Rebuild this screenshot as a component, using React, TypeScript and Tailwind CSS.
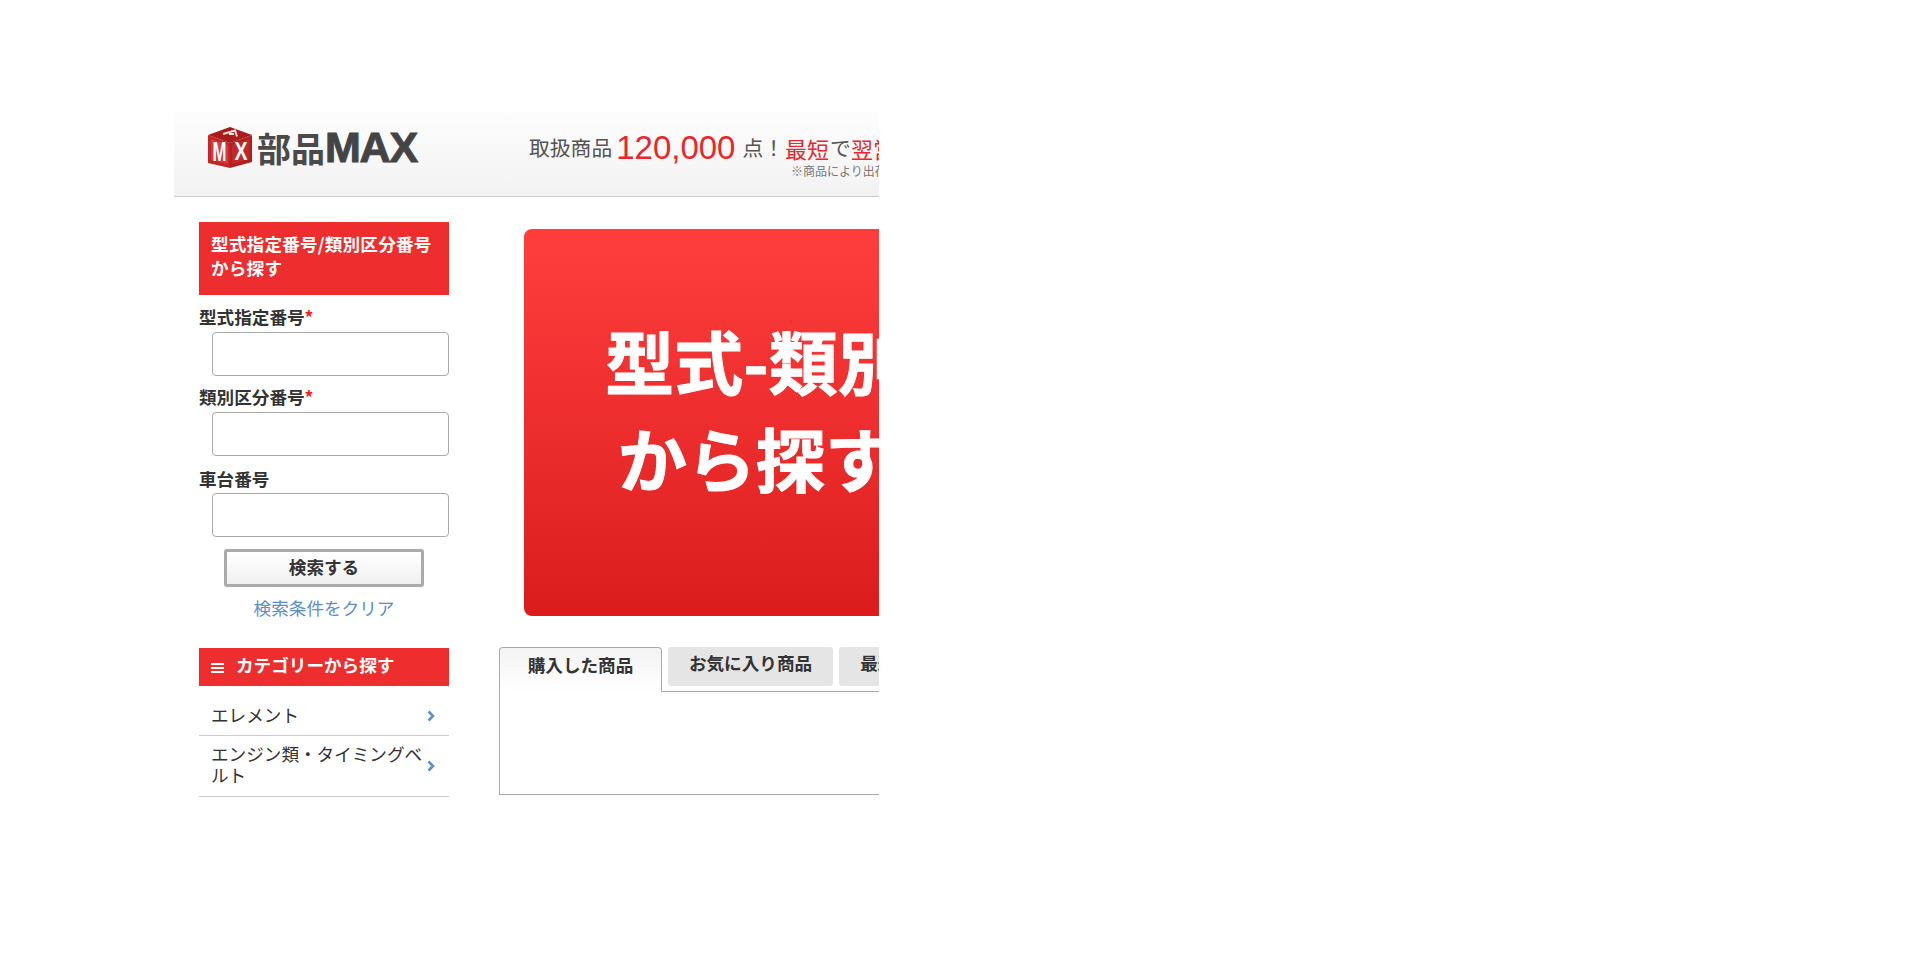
import React from "react";

const jp = "[font-family:'Noto_Sans_CJK_JP','Liberation_Sans',sans-serif]";

function CubeLogo() {
  return (
    <svg width="44" height="41" viewBox="0 0 44 41" className="shrink-0">
      <polygon points="22,0 44,8 22,16 0,8" fill="#a81c1c" />
      <polygon points="0,8 22,16 22,41 0,36" fill="#c42626" />
      <polygon points="44,8 22,16 22,41 44,35" fill="#b02020" />
      <polygon points="3,12 20,18 20,37 3,33" fill="#d63a3a" />
      <polygon points="41,12 24,18 24,37 41,32" fill="#c22a2a" />
      <path d="M15 7 L27 3.5 L29 9.5 M21 7 L26 7" fill="none" stroke="#f3dcdc" strokeWidth="2" />
      <text x="4.5" y="34" fontSize="27" fontWeight="700" fill="#fff" fontFamily="Liberation Sans" textLength="14" lengthAdjust="spacingAndGlyphs">M</text>
      <text x="26.5" y="33" fontSize="26" fontWeight="700" fill="#fff" fontFamily="Liberation Sans" textLength="13" lengthAdjust="spacingAndGlyphs">X</text>
    </svg>
  );
}

function Chevron() {
  return (
    <svg width="8" height="12" viewBox="0 0 8 12" className="shrink-0">
      <path d="M1.5 1.5 L6 6 L1.5 10.5" fill="none" stroke="#5a8fc9" strokeWidth="2.6" />
    </svg>
  );
}

function Field({ label, required, top, after }: { label: string; required?: boolean; top: string; after: string }) {
  return (
    <div className={top}>
      <div className="h-6 text-[17.6px] leading-[22px] font-bold text-[#333] whitespace-nowrap">
        {label}
        {required && <span className="text-[#ff1a1a]">*</span>}
      </div>
      <input
        type="text"
        className={`${after} ml-[13px] block w-[237px] h-[44px] bg-white border border-[#aaaaaa] rounded-[4px]`}
      />
    </div>
  );
}

export default function App() {
  return (
    <div className={`${jp} min-h-[968px] bg-white pt-[112px] pl-[174px]`}>
      <div className="w-[705px] overflow-hidden">
        {/* header */}
        <header className="h-[85px] flex items-start pl-[34px] pt-[15px] bg-gradient-to-b from-[#fdfdfd] to-[#f2f2f2] border-b border-[#cccccc] whitespace-nowrap">
          <div className="flex items-center h-[41px] shrink-0 w-[211px]">
            <CubeLogo />
            <span className="ml-[5px] text-[34px] leading-[41px] font-bold text-[#4a4a4a]">部品</span>
            <span className="text-[43px] leading-[41px] font-bold text-[#444] tracking-[-1.2px] [-webkit-text-stroke:1px_#444] [font-family:'Liberation_Sans',sans-serif]">MAX</span>
          </div>
          <div className="ml-[110px] shrink-0 pt-[4px]">
            <div className="h-[34px] flex items-center text-[20.8px] text-[#555]">
              <span>取扱商品</span>
              <span className="ml-[4px] text-[33px] text-[#e8262b] [font-family:'Liberation_Sans',sans-serif]">120,000</span>
              <span className="ml-[7px]">点！</span>
              <span className="ml-[1px] text-[22px] text-[#e8262b]">最短</span>
              <span className="ml-[1px]">で</span>
              <span className="text-[22px] text-[#e8262b]">翌営業日出荷</span>
            </div>
            <div className="ml-[262px] -mt-[1px] h-[14px] text-[12px] leading-[14px] text-[#777]">※商品により出荷までお時間をいただく場合があります</div>
          </div>
        </header>

        <div className="flex items-start">
          {/* sidebar */}
          <aside className="ml-[25px] w-[250px] shrink-0 mt-[25px]">
            <h2 className="h-[73px] px-[12px] pt-[10px] bg-[#ee2d2f] text-white text-[17.6px] leading-6 font-bold tracking-[0.2px]">
              型式指定番号/類別区分番号
              <br />
              から探す
            </h2>
            <Field label="型式指定番号" required top="mt-[11px]" after="mt-[2px]" />
            <Field label="類別区分番号" required top="mt-[10px]" after="mt-[2px]" />
            <Field label="車台番号" top="mt-[12px]" after="mt-[1px]" />
            <button
              type="button"
              className="block mx-auto mt-[12px] w-[200px] h-[38px] border-[3px] border-[#aaaaaa] rounded-[3px] bg-gradient-to-b from-white to-[#f0f0f0] text-[17.6px] font-bold text-[#333]"
            >
              <span className="block -mt-[1px]">検索する</span>
            </button>
            <div className="mt-[10px] h-6 leading-[22px] text-center text-[17.6px] text-[#5b8dcb]">検索条件をクリア</div>

            <h2 className="mt-[27px] h-[38px] flex items-center pl-[12px] bg-[#ee2d2f] text-white text-[17.6px] font-bold">
              <span className="flex flex-col gap-[2px] w-[13px] mt-[2px]">
                <span className="h-[2px] bg-white" />
                <span className="h-[2px] bg-white" />
                <span className="h-[2px] bg-white" />
              </span>
              <span className="ml-[12px] mb-[4px]">カテゴリーから探す</span>
            </h2>
            <ul className="mt-[10px] text-[17.6px] leading-[21px] text-[#333]">
              <li className="h-[40px] flex items-center pl-[12px] pr-[14px] border-b border-[#cccccc]">
                <span className="flex-1 mb-[2px]">エレメント</span>
                <Chevron />
              </li>
              <li className="h-[61px] flex items-center pl-[12px] pr-[14px] border-b border-[#cccccc]">
                <span className="w-[212px] mb-[4px]">エンジン類・タイミングベルト</span>
                <span className="ml-auto">
                  <Chevron />
                </span>
              </li>
            </ul>
          </aside>

          {/* main */}
          <main className="ml-[50px] shrink-0 w-[700px]">
            <section className="ml-[25px] mt-[32px] w-[464px] h-[387px] rounded-[8px] bg-gradient-to-b from-[#ff3d3d] to-[#dc1c1c] flex items-center justify-center">
              <div className="mt-[-28px] text-white text-[69px] leading-[97px] font-bold text-center [-webkit-text-stroke:1px_#fff]">
                型式-類別
                <br />
                から探す
              </div>
            </section>
            <div className="mt-[31px] flex items-start gap-[6px] h-[44px] text-[17.6px] font-bold text-[#333]">
              <div className="relative z-10 w-[163px] h-[45px] pb-[10px] flex items-center justify-center bg-gradient-to-b from-[#f3f3f3] to-white border border-b-0 border-[#aaaaaa] rounded-t-[4px]">
                購入した商品
              </div>
              <div className="w-[165px] h-[39px] pb-[6px] flex items-center justify-center bg-[#e5e5e5] rounded-[3px]">お気に入り商品</div>
              <div className="w-[165px] h-[39px] pb-[6px] pr-[17px] flex items-center justify-center bg-[#e5e5e5] rounded-[3px]">最近見た商品</div>
            </div>
            <div className="h-[104px] border border-[#aaaaaa] bg-white" />
          </main>
        </div>
      </div>
    </div>
  );
}
